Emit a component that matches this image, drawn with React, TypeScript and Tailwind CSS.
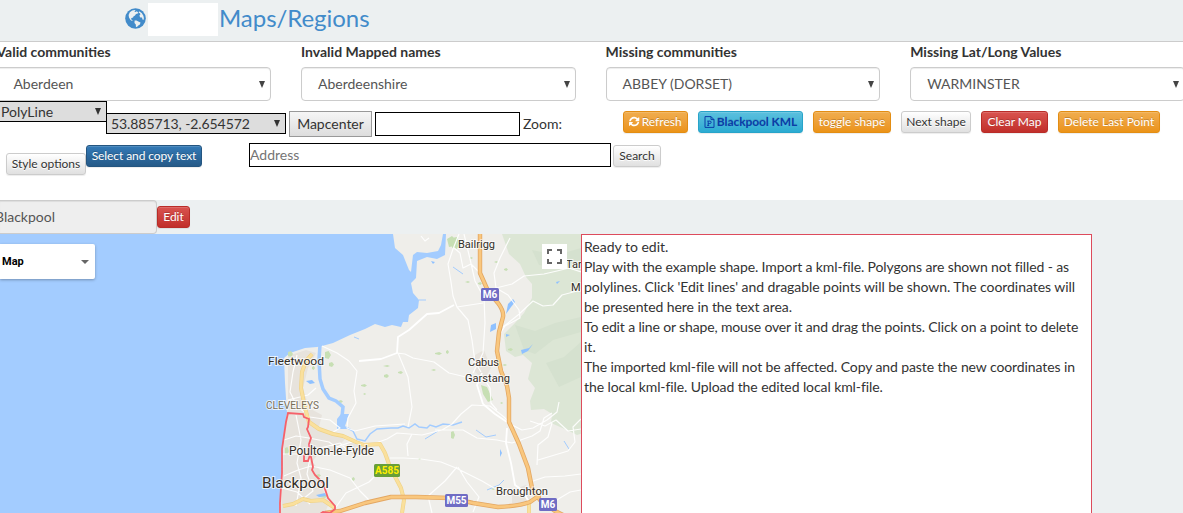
import React from "react";

function GlobeIcon() {
  return (
    <svg viewBox="0 0 21 21" className="mt-2 size-[21px] shrink-0">
      <circle cx="10.5" cy="10.5" r="10.3" fill="currentColor" />
      <g fill="#ecf0f1">
        <path d="M4.8 4.2l2.4-1.6 2.6-.5.8.7-1.4.8 1.4.5 1.2-.8 1.4 1.1-.4 1.2-1.8.5-1 1.3-1.6 1.1-.3 1.1-1.5.3-.7 1.1.9.7.8.7-.4.5-1.7-1-1.5-2.4-.4-2.4z" />
        <path d="M9.6 12.6l1.9-.2 1.8 1 2.2 1.2-.6 1.8-1.6 1-1.4 1.7-1-.4-.1-2.1-1.3-1.7z" />
        <path d="M14 3.2l2.7 1.9 1.7 2.6.5 2.5-.5 1.9-.9-.6-.5-1.9-1.7-.2-.9-1.6 1-1.5-.6-1.2-1.1.1z" />
      </g>
    </svg>
  );
}

function RefreshIcon() {
  return (
    <svg viewBox="0 0 1536 1792" className="h-3 w-[10.3px]" fill="currentColor">
      <path d="M1511 928q0 5-1 7-64 268-268 434.5t-478 166.5q-146 0-282.5-55t-243.5-157l-129 129q-19 19-45 19t-45-19-19-45v-448q0-26 19-45t45-19h448q26 0 45 19t19 45-19 45l-137 137q71 66 161 102t187 36q134 0 250-65t186-179q11-17 53-117 8-23 30-23h192q13 0 22.5 9.5t9.5 22.5zm25-672v448q0 26-19 45t-45 19h-448q-26 0-45-19t-19-45 19-45l138-138q-148-137-349-137-134 0-250 65t-186 179q-11 17-53 117-8 23-30 23h-199q-13 0-22.5-9.5t-9.5-22.5v-7q65-268 270-434.5t480-166.5q146 0 284 55.5t245 156.5l130-129q19-19 45-19t45 19 19 45z" />
    </svg>
  );
}

function Arrow({ className = "" }: { className?: string }) {
  return (
    <svg viewBox="0 0 6 7" className={`h-[7px] w-[6px] shrink-0 ${className}`}>
      <path d="M0 0h6L3 7z" fill="currentColor" />
    </svg>
  );
}

const columns = [
  { label: "Valid communities", value: "Aberdeen" },
  { label: "Invalid Mapped names", value: "Aberdeenshire" },
  { label: "Missing communities", value: "ABBEY (DORSET)" },
  { label: "Missing Lat/Long Values", value: "WARMINSTER" },
];

const tones = {
  orange: "border-[#e38d13] bg-linear-to-b from-[#f0ad4e] to-[#eb9316] text-white [text-shadow:0_-1px_0_rgba(0,0,0,.2)]",
  blue: "border-[#28a4c9] bg-linear-to-b from-[#5bc0de] to-[#2aabd2] text-[#0b3da8] font-bold tracking-[-0.08px] [text-shadow:0_-1px_0_rgba(0,0,0,.12)]",
  navy: "border-[#245580] bg-linear-to-b from-[#337ab7] to-[#265a88] text-white [text-shadow:0_-1px_0_rgba(0,0,0,.2)]",
  red: "border-[#b92c28] bg-linear-to-b from-[#d9534f] to-[#c12e2a] text-white [text-shadow:0_-1px_0_rgba(0,0,0,.2)]",
  light: "border-[#ccc] bg-linear-to-b from-white to-[#e0e0e0] text-[#333] [text-shadow:0_1px_0_#fff]",
};

function Btn({ tone, className, children }: { tone: keyof typeof tones; className: string; children: React.ReactNode }) {
  return (
    <button
      className={`flex h-[22px] shrink-0 items-center justify-center gap-[2px] whitespace-nowrap rounded-[3px] border text-[12px] leading-[18px] shadow-[inset_0_1px_0_rgba(255,255,255,.15),0_1px_1px_rgba(0,0,0,.075)] ${tones[tone]} ${className}`}
    >
      {children}
    </button>
  );
}

function KmlIcon() {
  return (
    <svg viewBox="0 0 11 12" className="h-3 w-[11px]" fill="none" stroke="currentColor" strokeWidth="1">
      <path d="M1 .6h6l3 3v7.8H1z M7 .6v3h3" />
      <path d="M3.2 9.4h2 M4.2 9.4V5.1 M3.3 5.1h2.5q1.4 0 1.4 1.2T5.8 7.5H4.2" />
    </svg>
  );
}

const notes = [
  { text: "Ready to edit.", tracking: "" },
  { text: "Play with the example shape. Import a kml-file. Polygons are shown not filled - as", tracking: "tracking-[-0.12px]" },
  { text: "polylines. Click 'Edit lines' and dragable points will be shown. The coordinates will", tracking: "tracking-[-0.06px]" },
  { text: "be presented here in the text area.", tracking: "tracking-[-0.08px]" },
  { text: "To edit a line or shape, mouse over it and drag the points. Click on a point to delete", tracking: "tracking-[-0.14px]" },
  { text: "it.", tracking: "" },
  { text: "The imported kml-file will not be affected. Copy and paste the new coordinates in", tracking: "tracking-[-0.1px]" },
  { text: "the local kml-file. Upload the edited local kml-file.", tracking: "tracking-[-0.09px]" },
];

const minorRoads =
  "M421 236l4 5 4-3M459 234l-6 15-5 15 3 18 2 14 4 11 11 13 4 20 3 22 6 10M464 234l6 25 5 22 9 17 1 25-2 30-10 20M480 273l-9-9-8 4-3-15-7-6M510 238l-10 20-6 15 2 15 12 7 11 15 1 8-15 8-5 8M488 290l24-6 12-8 20-2 13-3 12-3 12 4M503 327l15-12 15-14 10 5 10-1 9-10 19-5M457 307l26-4M397 353l8 1 8 4 21 4 15 11 17 4M398 353l10 24 4 30-4 20M349 361l8 10-3 20 2 12-8 15-1 10 8 3 20-5 30-2M349 361l-12-8-15-7M373 444l14-5 10-6 25 2 20-5 10-6 9-10 11-9 18 1 14 11 8 8 10 5 11-2 14-8 10-8 2-10M435 430l28 0 14 8 20 2 15 3 20-7 8-5 4-13 8-5M390 458l14 0 17 1 20 3 15 6 16 8 10 5 12 7 12 1M457 467l-12 14-17 15 4 17M458 467l9 15 12 15-6 15M485 380l5 8 1 15 6 7M530 482l15-5 20-1 16-2M538 460l10-3 20-6 7-9-2-15 8-8M552 423l-4 14-10 8-1 20M544 509l16-11 10-6 11-2M412 434l-5 10 1 12M530 421l15 5 11-6 12 11 13-2M297 355l-4 17-3 20 7 14 13 11 20 3 10 8-10 6M288 400l20-5 8-7M296 415l5 25-4 23 4 15-5 28M284 440l12-4 13 2 20 4 7 5 19-6M283 454l20 0 17-6 20-5 8 8 14 1M284 476l14-6 13-4 19 4 20 8 10 13 12 12M303 499l10-8-6-17 3-16M282 488l15 4 13 12M336 507l10-14 23-11 15-15";
const mainRoads =
  "M454 305l-15 8-12 1-18 16-11 7-1 16-16 6-22 2M482 373l-5 12 6 19M507 428l-1 15 5 20 4 22 7 5 7 12-1 14M483 404l12 10 12 8";

const greens = [
  [452, 237, 8, 12], [325, 351, 6, 8], [329, 362, 5, 5], [312, 366, 3, 4], [288, 351, 5, 6],
  [285, 447, 4, 8], [320, 494, 8, 4], [361, 384, 6, 3], [383, 365, 7, 2], [384, 374, 5, 4],
  [435, 352, 7, 3], [431, 369, 5, 2], [398, 371, 5, 3], [469, 257, 4, 2], [494, 261, 4, 2],
  [504, 268, 4, 3], [465, 281, 5, 2], [508, 348, 5, 3], [451, 431, 4, 8], [446, 350, 3, 4],
  [338, 400, 5, 3], [316, 474, 5, 3], [352, 477, 3, 4], [363, 393, 3, 2], [500, 402, 3, 2],
  [478, 282, 4, 3], [502, 364, 5, 2], [418, 458, 3, 2], [491, 488, 4, 2],
];

const aRoads =
  "M312 354l-6 7-4 11-1 16 4 20 4 14 10 7 14 5 10 2 13 6 8 3 16-1 5 9 5 14 11 21 3 12-2 13M283 506l10-2 10-5 8 2 12-1 12 8M529 503v10";
const motorways =
  "M480 234v39l8 18 10 12q6 8 5 14l-4 15-2 19 4 20 6 15 2 12v24l10 22 9 24 4 20 8 12 15 11 20 10M325 513l15-2 25-8 26-6h25l34 1 23 5 25 4q21-1 32-5l10-7";

function Shield({ x, y, w, label, green }: { x: number; y: number; w: number; label: string; green?: boolean }) {
  return (
    <g>
      <rect x={x} y={y} width={w} height="13" rx="1.5" fill={green ? "#689f38" : "#6f6cc4"} />
      <text x={x + w / 2} y={y + 10} textAnchor="middle" fontSize="10" fontWeight="700" fill={green ? "#ffee00" : "#fff"}>
        {label}
      </text>
    </g>
  );
}

function RegionMap() {
  return (
    <svg viewBox="0 234 581 279" className="block h-[279px] w-[581px]">
      <rect y="234" width="581" height="279" fill="#a3ccff" />
      <path
        d="M393 234L395 248 403 255 409 270 411 272 413 255 417 252 427 253 438 251 441 245 443 234H446L445 255 437 259 427 257 417 261 416 278 411 283 413 293 419 300 418 308 409 315 408 322 403 322 401 327 392 325 385 327 375 324 365 329 350 335 333 343 322 346 317 347 305 348 290 353 284 358 285 383 287 413 283 447 282 473 279 513H581V234z"
        fill="#efeeea"
      />
      <path d="M502 234l7 20 11 10 6 13 6 7 0 14-8 15-9 10-11 11 2 17 9 6 8-2 9 8-4 16 7 9-5 13 1 9 13-1 8 5-1 9 16 7 10 5 14-4V234z" fill="#dce6d5" />
      <path d="M515 325l20 6 20-8 26-6v15l-28 8-18 14-11-4zM532 250l25 5 24-7v12l-20 8-22-3zM546 363l18-6 17-15v35l-22 10z" fill="#d5e1cf" />
      <path d="M288 356l18-6 10 3-8 15-5 20 6 20 13 7-3 12 14 7 12 5-12 13-15 2-6 8 8 8 0 13 9 20-4 10H281l2-40 1-40 4-25z" fill="#e7e3dd" />
      <path d="M475 355l9-5 7 18-7 12-9-8zM512 490l14-5 5 15-9 7-10-4zM352 440l10 3 5 9-14 2-10-6z" fill="#e7e3dd" />
      <g fill="#c7dfb4">
        {greens.map(([x, y, w, h], i) => (
          <path key={i} d={`M${x} ${y + 1}l${w * 0.6} -1 ${w * 0.4} ${h * 0.5} ${-w * 0.4} ${h * 0.5} ${-w * 0.6} -1z`} />
        ))}
        <path d="M447 239l5-3 5 5-2 5-6 1zM481 385l6 2 6 13-5 2-5-8z" />
      </g>
      <path d="M320 345l-1 15 1 19 3 10 6 9 7 3 7 6-1 10" fill="none" stroke="#a3ccff" strokeWidth="3.5" />
      <path d="M341 414h8l-2 6-2 6 4 3-12 0 0-10z" fill="#a3ccff" />
      <path d="M346 427l7 4 4 8 8 2 5-7 7-5 14-1 7 0 5-2 6 2 6-4 4 3 8 1 3-3 6 2 7-3 10 1 9-3" fill="none" stroke="#a3ccff" strokeWidth="1.5" />
      <path d="M306 381l6-1 3 3-5 1zM508 304l5-5 2 3-4 5-5 7zM491 325l5-2 0 6-6 3zM521 350l8-2 4-4-5 7-6 3zM431 261l4 1-2 2zM500 449l2 4-2 4zM316 495l9-2 1 3-7 1zM506 334l4 1-4 2zM556 282l4-1-3 3z" fill="#8fc1ff" />
      <path d="M453 267l10 7M476 430l10 7 10-2M419 300l7 0M425 439l13-8M564 441l5 8M487 490l12-5 5-5M354 337l5 2" fill="none" stroke="#a3ccff" />
      <path d={minorRoads} fill="none" stroke="#fff" strokeWidth="1.2" strokeOpacity=".9" strokeLinejoin="round" />
      <path d={mainRoads} fill="none" stroke="#fff" strokeWidth="1.8" strokeLinejoin="round" />
      <g fill="none" strokeLinejoin="round">
        <path d={aRoads} stroke="#efd287" strokeWidth="4" />
        <path d={aRoads} stroke="#fae09c" strokeWidth="2.8" />
        <path d={motorways} stroke="#e3a763" strokeWidth="4.4" />
        <path d={motorways} stroke="#f9c77e" strokeWidth="2.8" />
      </g>
      <path
        d="M280 513l0-10 2-30 0-24 4-27 2-9 15 1 1 3 5 2-1 8-1 2 4 9-2 6 1 11-2 6-4 0 0-5 2-3M308 454l3 3 2 10-1 3 3 5 8 8 5 15 7 8 0 3-5 4-7-1-3 2"
        fill="none"
        stroke="#f6616a"
        strokeWidth="1.8"
      />
      <g fontFamily="Roboto, sans-serif" fill="#332e27" stroke="#fff" strokeOpacity=".7" strokeWidth="2" paintOrder="stroke" fontSize="11.5">
        <text x="458" y="248" textLength="37" lengthAdjust="spacingAndGlyphs">Bailrigg</text>
        <text x="268" y="365" textLength="56" lengthAdjust="spacingAndGlyphs">Fleetwood</text>
        <text x="266" y="409" textLength="53" lengthAdjust="spacingAndGlyphs" fontSize="10.5" fill="#776e58">CLEVELEYS</text>
        <text x="289" y="455" textLength="85" lengthAdjust="spacingAndGlyphs" fontSize="12">Poulton-le-Fylde</text>
        <text x="262" y="488" textLength="67" lengthAdjust="spacingAndGlyphs" fontSize="15.5">Blackpool</text>
        <text x="468" y="366" textLength="31" lengthAdjust="spacingAndGlyphs">Cabus</text>
        <text x="465" y="382" textLength="45" lengthAdjust="spacingAndGlyphs">Garstang</text>
        <text x="496" y="495" textLength="52" lengthAdjust="spacingAndGlyphs">Broughton</text>
        <text x="566" y="268" fontSize="11">Tar</text>
        <text x="571" y="291" fontSize="11">M</text>
      </g>
      <g fontFamily="Roboto, sans-serif">
        <Shield x={481} y={288} w={18} label="M6" />
        <Shield x={445} y={494} w={23} label="M55" />
        <Shield x={539} y={498} w={18} label="M6" />
        <Shield x={374} y={464} w={26} label="A585" green />
      </g>
    </svg>
  );
}

export default function App() {
  return (
    <div className="h-[513px] w-[1183px] overflow-hidden bg-[#ecf0f1] font-[Lato,sans-serif] text-[14px] leading-5 text-[#333]">
      <header className="flex h-[42px] border-b border-[#ccc] pl-[125px] text-[#428bca]">
        <GlobeIcon />
        <div className="ml-[2px] mt-[3px] h-[33px] w-[70px] bg-white" />
        <h1 className="ml-px mt-[3px] whitespace-nowrap text-[24px] leading-[30px] tracking-[-0.05px]">Maps/Regions</h1>
      </header>

      <section className="h-[158px] bg-white">
        <div className="-ml-[3.6px] flex h-[59px] gap-[30px]">
          {columns.map((c) => (
            <div key={c.label} className="w-[274.6px] shrink-0">
              <div className="h-[25px] font-bold">{c.label}</div>
              <div className="flex h-[34px] items-center justify-between rounded-[4px] border border-[#ccc] bg-white pl-4 pr-[5px] text-[#555] shadow-[inset_0_1px_1px_rgba(0,0,0,.075)]">
                <span>{c.value}</span>
                <Arrow className="text-[#444]" />
              </div>
            </div>
          ))}
        </div>

        <div className="flex h-[42px] items-start">
          <div className="flex h-[21px] w-[107px] shrink-0 items-center justify-between border border-l-0 border-black bg-[#ddd] pl-px pr-[5px]">
            PolyLine <Arrow />
          </div>
          <div className="-ml-px mt-3 flex h-[21px] w-[180px] shrink-0 items-center justify-between border border-black bg-[#ddd] pl-1 pr-[5px]">
            <span className="w-[139px] whitespace-nowrap tracking-[-0.08px]">53.885713, -2.654572</span>
            <Arrow />
          </div>
          <button className="ml-[3px] mt-[10px] h-[26px] w-[83px] shrink-0 border border-[#999] bg-linear-to-b from-[#f6f6f6] to-[#ddd]">
            Mapcenter
          </button>
          <div className="ml-[3px] mt-[11px] h-6 w-[145px] shrink-0 border border-black bg-white" />
          <span className="ml-[3px] mt-[13px] w-[100px]">Zoom:</span>
          <div className="mt-[10px] flex gap-[10px]">
            <Btn tone="orange" className="w-[65px]">
              <RefreshIcon />
              Refresh
            </Btn>
            <Btn tone="blue" className="w-[105px]">
              <KmlIcon />
              Blackpool KML
            </Btn>
            <Btn tone="orange" className="w-[78px]">toggle shape</Btn>
            <Btn tone="light" className="w-[70px]">Next shape</Btn>
            <Btn tone="red" className="w-[67px]">Clear Map</Btn>
            <Btn tone="orange" className="w-[102px]">Delete Last Point</Btn>
          </div>
        </div>

        <div className="flex items-start pl-[6px]">
          <Btn tone="light" className="mt-[10px] w-20">Style options</Btn>
          <Btn tone="navy" className="mt-[2px] w-[116px] tracking-[-0.08px]">Select and copy text</Btn>
          <div className="ml-[47px] flex h-6 w-[362px] items-center border border-black bg-white text-[#757575]">Address</div>
          <Btn tone="light" className="ml-[2px] mt-[2px] w-12">Search</Btn>
        </div>
      </section>

      <div className="flex h-[34px] items-center">
        <div className="flex h-[34px] w-[157px] items-center rounded-r-[4px] border border-l-0 border-[#ccc] bg-[#eee] text-[#555] shadow-[inset_0_1px_1px_rgba(0,0,0,.075)]">
          <span className="-ml-[5px]">Blackpool</span>
        </div>
        <Btn tone="red" className="w-[33px]">Edit</Btn>
      </div>

      <main className="flex h-[279px]">
        <div className="relative w-[581px] shrink-0 overflow-hidden">
          <RegionMap />
          <div className="absolute left-0 top-[10px] flex h-[35px] w-[95px] items-center justify-between rounded-r-[2px] bg-white pl-[2px] pr-[6px] font-[Roboto,sans-serif] text-[11px] font-bold text-black shadow-[0_1px_3px_rgba(0,0,0,.3)]">
            Map
            <svg viewBox="0 0 8 4" className="h-1 w-2">
              <path d="M0 0h8L4 4z" fill="#666" />
            </svg>
          </div>
          <div className="absolute left-[542px] top-[10px] flex size-[25px] items-center justify-center bg-white">
            <svg viewBox="0 0 15 15" className="size-[15px]" fill="none" stroke="#666" strokeWidth="2">
              <path d="M1 5V1h4M10 1h4v4M14 10v4h-4M5 14H1v-4" />
            </svg>
          </div>
        </div>
        <div className="w-[511px] shrink-0 border border-b-0 border-[#dd4b5c] bg-white px-[2px] pt-[2px]">
          {notes.map((n) => (
            <p key={n.text} className={`whitespace-nowrap ${n.tracking}`}>
              {n.text}
            </p>
          ))}
        </div>
      </main>
    </div>
  );
}
